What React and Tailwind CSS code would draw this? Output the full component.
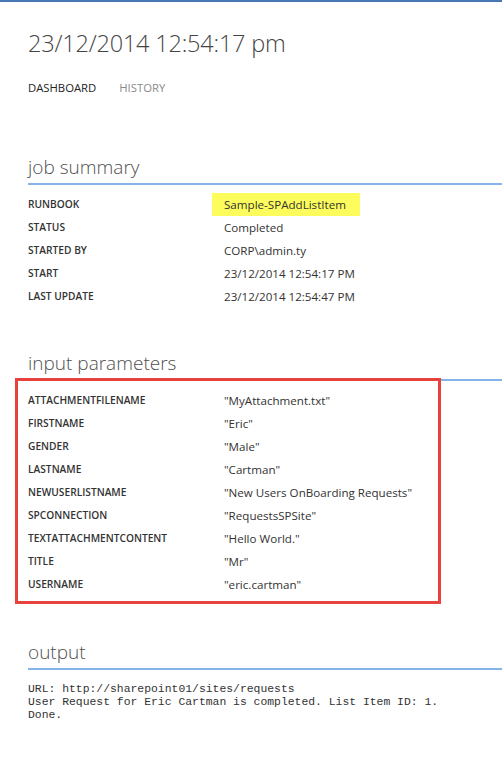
const summary = [
  { label: "RUNBOOK", value: "Sample-SPAddListItem", highlight: true },
  { label: "STATUS", value: "Completed" },
  { label: "STARTED BY", value: "CORP\\admin.ty" },
  { label: "START", value: "23/12/2014 12:54:17 PM" },
  { label: "LAST UPDATE", value: "23/12/2014 12:54:47 PM" },
];

const params = [
  ["ATTACHMENTFILENAME", '"MyAttachment.txt"'],
  ["FIRSTNAME", '"Eric"'],
  ["GENDER", '"Male"'],
  ["LASTNAME", '"Cartman"'],
  ["NEWUSERLISTNAME", '"New Users OnBoarding Requests"'],
  ["SPCONNECTION", '"RequestsSPSite"'],
  ["TEXTATTACHMENTCONTENT", '"Hello World."'],
  ["TITLE", '"Mr"'],
  ["USERNAME", '"eric.cartman"'],
];

function SectionTitle({ children }) {
  return (
    <h2 className="border-b-2 border-[#84b4ea] pb-[4px] text-[19px] font-light leading-[24px] text-[#505050]">
      {children}
    </h2>
  );
}

function Row({ label, value, highlight }) {
  return (
    <div className="grid h-[23px] grid-cols-[196px_1fr] items-center">
      <span className="text-[10.2px] font-semibold text-[#333]">{label}</span>
      <span className="text-[11.6px] text-[#333]">
        {highlight ? (
          <span className="-ml-[12px] inline-block w-[148px] bg-[#fcfc5c] py-[3px] pl-[12px]">{value}</span>
        ) : (
          value
        )}
      </span>
    </div>
  );
}

export default function App() {
  return (
    <div className="min-h-screen border-t-2 border-[#4a76b4] bg-white font-['Open_Sans',sans-serif]">
      <div className="pl-[28px] pt-[25px]">
        <h1 className="text-[23.5px] font-light leading-[32px] tracking-[-0.2px] text-[#444]">23/12/2014 12:54:17 pm</h1>

        <nav className="mt-[21px] flex gap-[23px] text-[11.3px] leading-[16px]">
          <span className="text-[#222]">DASHBOARD</span>
          <span className="text-[#8a8a8a]">HISTORY</span>
        </nav>

        <section className="mt-[59px]">
          <SectionTitle>job summary</SectionTitle>
          <div className="pt-[8px]">
            {summary.map((row) => (
              <Row key={row.label} {...row} />
            ))}
          </div>
        </section>

        <section className="relative mt-[43px]">
          <SectionTitle>input parameters</SectionTitle>
          <div className="pt-[8px]">
            {params.map(([label, value]) => (
              <Row key={label} label={label} value={value} />
            ))}
          </div>
          <div className="pointer-events-none absolute -left-[13px] top-[27px] h-[226px] w-[426px] border-[3px] border-[#e8423f]" />
        </section>

        <section className="mt-[44px]">
          <SectionTitle>output</SectionTitle>
          <pre className="pt-[13px] font-['Liberation_Mono',monospace] text-[11.4px] leading-[13px] text-[#333]">
            {"URL: http://sharepoint01/sites/requests\nUser Request for Eric Cartman is completed. List Item ID: 1.\nDone."}
          </pre>
        </section>
      </div>
    </div>
  );
}
